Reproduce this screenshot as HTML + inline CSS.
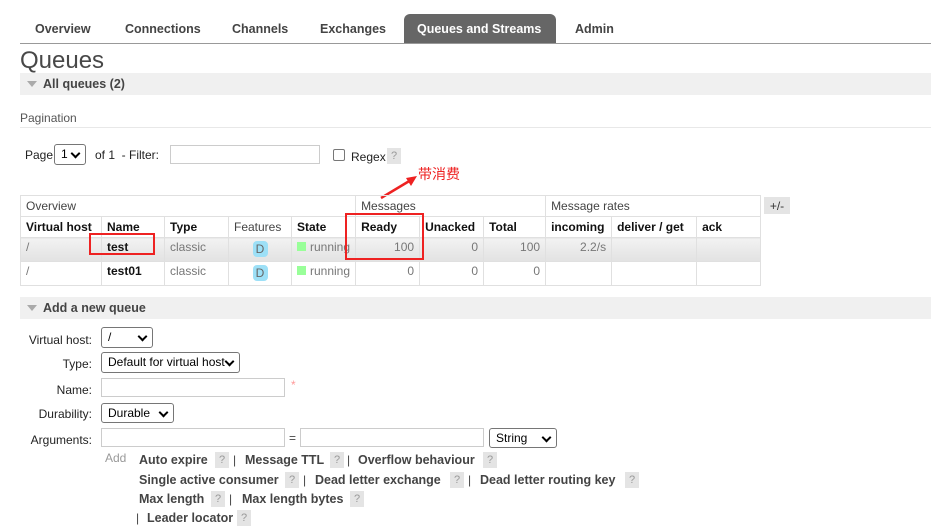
<!DOCTYPE html>
<html><head><meta charset="utf-8"><style>
*{margin:0;padding:0;box-sizing:border-box}
body{width:931px;height:520px;overflow:hidden;background:#fff;font-family:"Liberation Sans","Noto Sans CJK SC",sans-serif;font-size:12px;color:#444;position:relative}
.a{position:absolute;white-space:nowrap}
.b{font-weight:bold}
.tab{position:absolute;top:22px;font-weight:bold;font-size:12.5px;color:#444}
.bar{position:absolute;left:20px;width:911px;height:22px;background:#f0f0f0}
.tri{position:absolute;left:7px;top:8px;border-left:5px solid transparent;border-right:5px solid transparent;border-top:6px solid #aaa}
.bar span{position:absolute;left:23px;top:4px;font-weight:bold;color:#444;font-size:12.5px}
.sel{position:absolute;border:1px solid #767676;border-radius:3px;background:#fff;color:#000;font-size:12px;padding:2px 0 0 6px}
.sel:after{content:"";position:absolute;right:6px;top:5px;width:5px;height:5px;border-right:2px solid #000;border-bottom:2px solid #000;transform:rotate(45deg)}
.inp{position:absolute;border:1px solid #ccc;background:#fff}
.q{position:absolute;background:#e4e4e4;color:#999;width:14px;height:16px;text-align:center;font-size:11px;padding-top:2px}
table{position:absolute;left:20px;top:195px;border-collapse:collapse;font-size:12px}
td,th{border:1px solid #e0e0e0;height:21px;padding:0 5px;text-align:left;white-space:nowrap}
th{font-weight:bold;color:#111}
th.g{font-weight:normal;color:#444}
tr.r1 td,tr.r2 td{height:24px;color:#777;vertical-align:top;padding-top:2px}
tr.r1 td{background:linear-gradient(#f2f2f2,#e2e2e2)}
td.n{text-align:right}
.D{display:inline-block;background:#9de0f7;color:#666;border-radius:4px;width:15px;height:16px;text-align:center;line-height:16px;margin-top:1px}
.run{display:inline-block;width:9px;height:9px;background:#9f9;margin-right:4px}
.lbl{position:absolute;right:839px;font-size:12px;color:#222}
.lk{position:absolute;font-weight:bold;color:#444;font-size:12.5px}
.box{position:absolute;border:2px solid #e22}
</style></head><body>
<div class="a" style="left:20px;top:43px;width:911px;height:1px;background:#999"></div>
<div class="a" style="left:404px;top:14px;width:152px;height:29px;background:#666;border-radius:6px 6px 0 0"></div>
<div class="tab" style="left:35px">Overview</div>
<div class="tab" style="left:125px">Connections</div>
<div class="tab" style="left:232px">Channels</div>
<div class="tab" style="left:320px">Exchanges</div>
<div class="tab" style="left:417px;color:#fff">Queues and Streams</div>
<div class="tab" style="left:575px">Admin</div>
<div class="a" style="left:20px;top:47px;font-size:24px;color:#484848">Queues</div>
<div class="bar" style="top:73px"><div class="tri"></div><span>All queues (2)</span></div>
<div class="a" style="left:20px;top:111px;color:#555">Pagination</div>
<div class="a" style="left:20px;top:127px;width:911px;height:1px;background:#e8e8e8"></div>
<div class="a" style="left:25px;top:148px;color:#222">Page</div>
<div class="sel" style="left:54px;top:144px;width:32px;height:21px">1</div>
<div class="a" style="left:95px;top:148px;color:#222">of 1 &nbsp;- Filter:</div>
<div class="inp" style="left:170px;top:145px;width:150px;height:19px"></div>
<div class="a" style="left:333px;top:149px;width:12px;height:12px;border:1px solid #777;border-radius:2px"></div>
<div class="a" style="left:351px;top:150px;color:#222">Regex</div>
<div class="q" style="left:387px;top:148px">?</div>
<div class="a" style="left:418px;top:164px;color:#e22;font-size:14px">带消费</div>
<svg class="a" style="left:375px;top:172px" width="50" height="30"><line x1="6" y1="26" x2="36" y2="8" stroke="#e22" stroke-width="2.5"/><polygon points="42,4 31,6 36,14" fill="#e22"/></svg>
<table>
<tr><th class="g" colspan="5" style="width:335px">Overview</th><th class="g" colspan="3">Messages</th><th class="g" colspan="3">Message rates</th></tr>
<tr><th style="width:81px">Virtual host</th><th style="width:63px">Name</th><th style="width:64px">Type</th><th class="g" style="width:63px">Features</th><th style="width:64px">State</th><th style="width:64px">Ready</th><th style="width:64px">Unacked</th><th style="width:62px">Total</th><th style="width:66px">incoming</th><th style="width:85px">deliver / get</th><th style="width:64px">ack</th></tr>
<tr class="r1"><td>/</td><td style="color:#111;font-weight:bold">test</td><td>classic</td><td style="text-align:center"><span class="D">D</span></td><td><span class="run"></span>running</td><td class="n">100</td><td class="n">0</td><td class="n">100</td><td class="n">2.2/s</td><td></td><td></td></tr>
<tr class="r2"><td>/</td><td style="color:#111;font-weight:bold">test01</td><td>classic</td><td style="text-align:center"><span class="D">D</span></td><td><span class="run"></span>running</td><td class="n">0</td><td class="n">0</td><td class="n">0</td><td></td><td></td><td></td></tr>
</table>
<div class="a" style="left:764px;top:197px;width:26px;height:17px;background:#e4e4e4;text-align:center;color:#333;padding-top:2px">+/-</div>
<div class="box" style="left:89px;top:233px;width:66px;height:22px"></div>
<div class="box" style="left:345px;top:213px;width:79px;height:47px"></div>
<div class="bar" style="top:297px"><div class="tri"></div><span>Add a new queue</span></div>
<div class="lbl" style="top:333px">Virtual host:</div>
<div class="sel" style="left:101px;top:327px;width:52px;height:21px">/</div>
<div class="lbl" style="top:357px">Type:</div>
<div class="sel" style="left:101px;top:352px;width:139px;height:21px">Default for virtual host</div>
<div class="lbl" style="top:383px">Name:</div>
<div class="inp" style="left:101px;top:378px;width:184px;height:19px"></div>
<div class="a" style="left:291px;top:378px;color:#f99">*</div>
<div class="lbl" style="top:407px">Durability:</div>
<div class="sel" style="left:101px;top:403px;width:73px;height:20px">Durable</div>
<div class="lbl" style="top:433px">Arguments:</div>
<div class="inp" style="left:101px;top:428px;width:184px;height:19px"></div>
<div class="a" style="left:289px;top:431px">=</div>
<div class="inp" style="left:300px;top:428px;width:184px;height:19px"></div>
<div class="sel" style="left:489px;top:428px;width:68px;height:20px">String</div>
<div class="a" style="left:105px;top:451px;color:#999">Add</div>
<div class="lk" style="left:139px;top:453px">Auto expire</div><div class="q" style="left:215px;top:452px">?</div><div class="a" style="left:233px;top:453px">|</div>
<div class="lk" style="left:245px;top:453px">Message TTL</div><div class="q" style="left:330px;top:452px">?</div><div class="a" style="left:347px;top:453px">|</div>
<div class="lk" style="left:358px;top:453px">Overflow behaviour</div><div class="q" style="left:483px;top:452px">?</div>
<div class="lk" style="left:139px;top:473px">Single active consumer</div><div class="q" style="left:285px;top:472px">?</div><div class="a" style="left:303px;top:473px">|</div>
<div class="lk" style="left:315px;top:473px">Dead letter exchange</div><div class="q" style="left:450px;top:472px">?</div><div class="a" style="left:468px;top:473px">|</div>
<div class="lk" style="left:480px;top:473px">Dead letter routing key</div><div class="q" style="left:625px;top:472px">?</div>
<div class="lk" style="left:139px;top:492px">Max length</div><div class="q" style="left:211px;top:491px">?</div><div class="a" style="left:229px;top:492px">|</div>
<div class="lk" style="left:242px;top:492px">Max length bytes</div><div class="q" style="left:350px;top:491px">?</div>
<div class="a" style="left:136px;top:511px">|</div><div class="lk" style="left:147px;top:511px">Leader locator</div><div class="q" style="left:237px;top:510px">?</div>
</body></html>
